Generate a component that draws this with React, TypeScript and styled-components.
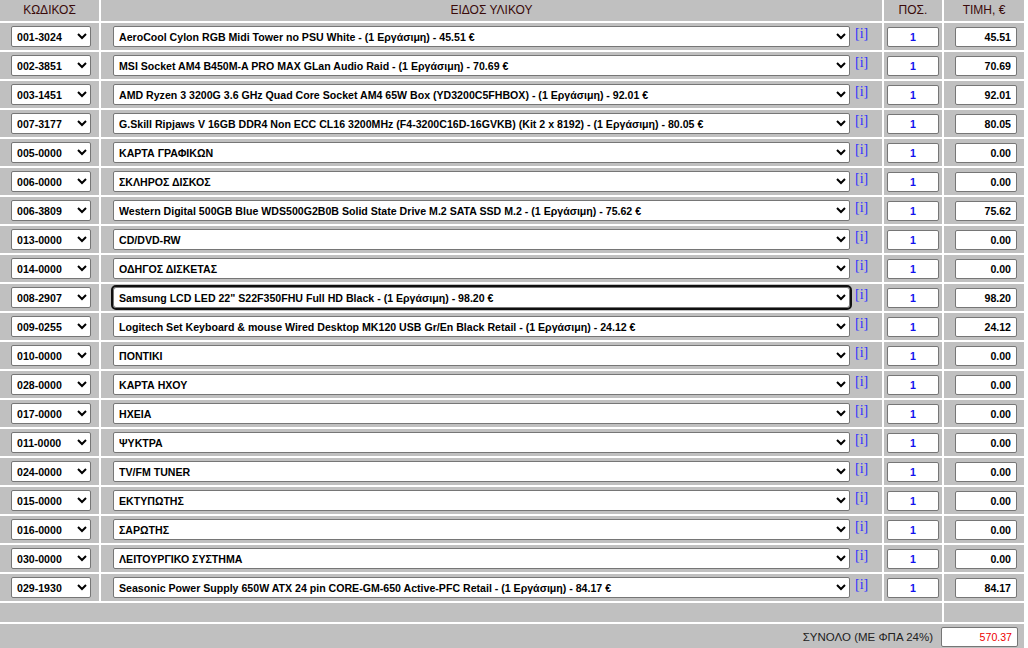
import React from "react";
import styled, { createGlobalStyle } from "styled-components";

const Global = createGlobalStyle`
  html, body { margin: 0; padding: 0; background: #ffffff; }
  body { font-family: "Liberation Sans", Arial, sans-serif; }
`;

const Grid = styled.div`
  width: 1024px;
  display: grid;
  grid-template-columns: 99px 781px 58px 80px;
  grid-template-rows: 21px repeat(20, 27px) 19px 26px;
  gap: 2px;
  background: #ffffff;
`;

const HeadCell = styled.div`
  background: #c0c0c0;
  color: #3a0a0a;
  font-size: 12px;
  line-height: 21px;
  text-align: center;
`;

const Cell = styled.div<{ $pl?: number; $justify?: string }>`
  background: #c0c0c0;
  display: flex;
  align-items: center;
  justify-content: ${(p) => p.$justify || "flex-start"};
  padding-left: ${(p) => p.$pl ?? 0}px;
  box-sizing: border-box;
  min-width: 0;
`;

const Select = styled.select<{ $w: number; $focused?: boolean }>`
  width: ${(p) => p.$w}px;
  height: 21px;
  box-sizing: border-box;
  font-family: "Liberation Sans", Arial, sans-serif;
  font-size: 10.6px;
  font-weight: bold;
  color: #000;
  background: #fff;
  border: 1px solid #767676;
  border-radius: 2px;
  padding: 0 0 0 1px;
  margin: 0;
  outline: ${(p) => (p.$focused ? "2px solid #101010" : "none")};
  outline-offset: 0;
  ${(p) => (p.$focused ? "border-radius: 3px;" : "")}
`;

const Info = styled.a`
  align-self: flex-start;
  margin: 3px 0 0 5px;
  font-family: "Liberation Serif", "Times New Roman", serif;
  font-size: 14px;
  line-height: 16px;
  color: #3030ff;
  text-decoration: none;
  cursor: pointer;
`;

const Input = styled.input<{ $w: number; $align: string; $color: string; $bold?: boolean }>`
  width: ${(p) => p.$w}px;
  height: 20px;
  box-sizing: border-box;
  font-family: "Liberation Sans", Arial, sans-serif;
  font-size: 10.6px;
  font-weight: ${(p) => (p.$bold ? "bold" : "normal")};
  color: ${(p) => p.$color};
  text-align: ${(p) => p.$align};
  background: #fff;
  border: 1px solid #767676;
  border-radius: 2px;
  padding: 0 5px;
  margin: 0;
  outline: none;
`;

const BlankWide = styled.div`
  grid-column: 1 / 4;
  background: #c0c0c0;
`;

const BlankNarrow = styled.div`
  background: #c0c0c0;
`;

const TotalRow = styled.div`
  grid-column: 1 / -1;
  background: #c0c0c0;
  display: flex;
  align-items: center;
  justify-content: flex-end;
  gap: 8px;
  padding-right: 6px;
`;

const TotalLabel = styled.span`
  font-size: 11.5px;
  color: #222;
`;

type Row = { code: string; desc: string; price: string; focused?: boolean };

const rows: Row[] = [
  { code: "001-3024", desc: "AeroCool Cylon RGB Midi Tower no PSU White - (1 Εργάσιμη) - 45.51 €", price: "45.51" },
  { code: "002-3851", desc: "MSI Socket AM4 B450M-A PRO MAX GLan Audio Raid - (1 Εργάσιμη) - 70.69 €", price: "70.69" },
  { code: "003-1451", desc: "AMD Ryzen 3 3200G 3.6 GHz Quad Core Socket AM4 65W Box (YD3200C5FHBOX) - (1 Εργάσιμη) - 92.01 €", price: "92.01" },
  { code: "007-3177", desc: "G.Skill Ripjaws V 16GB DDR4 Non ECC CL16 3200MHz (F4-3200C16D-16GVKB) (Kit 2 x 8192) - (1 Εργάσιμη) - 80.05 €", price: "80.05" },
  { code: "005-0000", desc: "ΚΑΡΤΑ ΓΡΑΦΙΚΩΝ", price: "0.00" },
  { code: "006-0000", desc: "ΣΚΛΗΡΟΣ ΔΙΣΚΟΣ", price: "0.00" },
  { code: "006-3809", desc: "Western Digital 500GB Blue WDS500G2B0B Solid State Drive M.2 SATA SSD M.2 - (1 Εργάσιμη) - 75.62 €", price: "75.62" },
  { code: "013-0000", desc: "CD/DVD-RW", price: "0.00" },
  { code: "014-0000", desc: "ΟΔΗΓΟΣ ΔΙΣΚΕΤΑΣ", price: "0.00" },
  { code: "008-2907", desc: "Samsung LCD LED 22\" S22F350FHU Full HD Black - (1 Εργάσιμη) - 98.20 €", price: "98.20", focused: true },
  { code: "009-0255", desc: "Logitech Set Keyboard & mouse Wired Desktop MK120 USB Gr/En Black Retail - (1 Εργάσιμη) - 24.12 €", price: "24.12" },
  { code: "010-0000", desc: "ΠΟΝΤΙΚΙ", price: "0.00" },
  { code: "028-0000", desc: "ΚΑΡΤΑ ΗΧΟΥ", price: "0.00" },
  { code: "017-0000", desc: "ΗΧΕΙΑ", price: "0.00" },
  { code: "011-0000", desc: "ΨΥΚΤΡΑ", price: "0.00" },
  { code: "024-0000", desc: "TV/FM TUNER", price: "0.00" },
  { code: "015-0000", desc: "ΕΚΤΥΠΩΤΗΣ", price: "0.00" },
  { code: "016-0000", desc: "ΣΑΡΩΤΗΣ", price: "0.00" },
  { code: "030-0000", desc: "ΛΕΙΤΟΥΡΓΙΚΟ ΣΥΣΤΗΜΑ", price: "0.00" },
  { code: "029-1930", desc: "Seasonic Power Supply 650W ATX 24 pin CORE-GM-650 Active-PFC Retail - (1 Εργάσιμη) - 84.17 €", price: "84.17" },
];

export default function App() {
  return (
    <>
      <Global />
      <Grid>
        <HeadCell>ΚΩΔΙΚΟΣ</HeadCell>
        <HeadCell>ΕΙΔΟΣ ΥΛΙΚΟΥ</HeadCell>
        <HeadCell>ΠΟΣ.</HeadCell>
        <HeadCell>ΤΙΜΗ, €</HeadCell>
        {rows.map((r) => (
          <React.Fragment key={r.code}>
            <Cell $pl={11}>
              <Select $w={80} defaultValue={r.code}>
                <option value={r.code}>{r.code}</option>
              </Select>
            </Cell>
            <Cell $pl={12}>
              <Select $w={737} $focused={r.focused} defaultValue={r.desc}>
                <option value={r.desc}>{r.desc}</option>
              </Select>
              <Info>[i]</Info>
            </Cell>
            <Cell $justify="center">
              <Input $w={52} $align="center" $color="#1010ee" $bold defaultValue="1" />
            </Cell>
            <Cell $pl={11}>
              <Input $w={62} $align="right" $color="#000" $bold defaultValue={r.price} readOnly />
            </Cell>
          </React.Fragment>
        ))}
        <BlankWide />
        <BlankNarrow />
        <TotalRow>
          <TotalLabel>ΣΥΝΟΛΟ (ΜΕ ΦΠΑ 24%)</TotalLabel>
          <Input $w={77} $align="right" $color="#ee0000" defaultValue="570.37" readOnly />
        </TotalRow>
      </Grid>
    </>
  );
}
